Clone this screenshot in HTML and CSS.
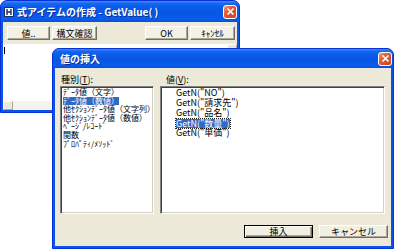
FILE: index.html
```html
<!DOCTYPE html>
<html lang="ja">
<head>
    <meta charset="UTF-8">
    <title>式アイテムの作成</title>
    <link rel="stylesheet" href="styles.css">
</head>
<body>
<div class="desk">

    <!-- main window -->
    <div class="win win-main">
        <div class="titlebar">
            <svg class="appicon" width="10" height="10" viewBox="0 0 10 10">
                <rect x="0.5" y="0.5" width="9" height="9" fill="#fff" stroke="#1c2a6a"/>
                <path d="M3 2v6M7 2v6M3 5h4" stroke="#1c2a6a" stroke-width="1.4"/>
            </svg>
            <span class="title">式アイテムの作成 - GetValue( )</span>
            <span class="close">
                <svg width="9" height="9" viewBox="0 0 9 9"><path d="M1.5 1.5l6 6M7.5 1.5l-6 6" stroke="#fff" stroke-width="1.7"/></svg>
            </span>
        </div>
        <div class="frame">
            <div class="toolbar">
                <button class="btn btn-tb">値..</button>
                <button class="btn btn-tb">構文確認</button>
                <span class="spacer"></span>
                <button class="btn btn-tb">OK</button>
                <button class="btn btn-tb">ｷｬﾝｾﾙ</button>
            </div>
            <div class="editor">
                <div class="edit-area"><span class="caret"></span></div>
                <div class="vscroll"><span class="sbtn"></span></div>
            </div>
            <div class="hscroll"><span class="sbtn"></span></div>
        </div>
    </div>

    <!-- insert value dialog -->
    <div class="win win-dlg">
        <div class="titlebar">
            <span class="title">値の挿入</span>
            <span class="close">
                <svg width="9" height="9" viewBox="0 0 9 9"><path d="M1.5 1.5l6 6M7.5 1.5l-6 6" stroke="#fff" stroke-width="1.7"/></svg>
            </span>
        </div>
        <div class="frame">
            <div class="dlg-grid">
                <label class="lbl">種別(<u>T</u>):</label>
                <label class="lbl">値(<u>V</u>):</label>
                <ul class="list list-kind">
                    <li>ﾃﾞｰﾀ値（文字）</li>
                    <li><span class="sel">ﾃﾞｰﾀ値（数値）</span></li>
                    <li>他ｾｸｼｮﾝﾃﾞｰﾀ値（文字列）</li>
                    <li>他ｾｸｼｮﾝﾃﾞｰﾀ値（数値）</li>
                    <li>ﾍﾟｰｼﾞ/ﾚｺｰﾄﾞ</li>
                    <li>関数</li>
                    <li>ﾌﾟﾛﾊﾟﾃｨ/ﾒｿｯﾄﾞ</li>
                </ul>
                <ul class="list list-value">
                    <li>GetN("NO")</li>
                    <li>GetN("請求先")</li>
                    <li>GetN("品名")</li>
                    <li><span class="sel focus">GetN("数量")</span></li>
                    <li>GetN("単価")</li>
                </ul>
            </div>
            <div class="dlg-buttons">
                <button class="btn btn-dlg default">挿入</button>
                <button class="btn btn-dlg">キャンセル</button>
            </div>
        </div>
    </div>

</div>
</body>
</html>
```

FILE: styles.css
```css
* {
    box-sizing: border-box;
}

body {
    margin: 0;
    background: #fff;
    font-family: "Noto Sans CJK JP", "Noto Sans", sans-serif;
    font-size: 9px;
    color: #000;
    overflow: hidden;
}

.desk {
    position: relative;
    width: 395px;
    height: 250px;
}

/* xp style windows */
.win {
    position: absolute;
    display: flex;
    flex-direction: column;
    background: #0a55e6;
    border: 1px solid #0831d9;
    border-radius: 7px 7px 0 0;
}

.win-main {
    left: 0;
    top: 0;
    width: 240px;
    height: 113px;
}

.win-dlg {
    left: 52px;
    top: 48px;
    width: 342px;
    height: 201px;
}

.titlebar {
    display: flex;
    align-items: center;
    height: 21px;
    padding: 0 2px 0 3px;
    border-radius: 6px 6px 0 0;
    background: linear-gradient(to bottom, #3d8df7 0%, #1467ee 12%, #0a5be8 30%, #0856e3 60%, #0a5ded 85%, #0650d8 100%);
    color: #fff;
    font-weight: bold;
    font-size: 10px;
}

.win-dlg .titlebar {
    height: 19px;
    padding-left: 7px;
    padding-right: 1px;
}

.appicon {
    margin-right: 3px;
    flex: none;
}

.title {
    flex: 1;
    white-space: nowrap;
    text-shadow: 1px 1px 0 #0b2f9a;
}

.close {
    display: flex;
    align-items: center;
    justify-content: center;
    width: 14px;
    height: 14px;
    border: 1px solid #fff;
    border-radius: 3px;
    background: linear-gradient(135deg, #ee9a7a 0%, #e2582f 40%, #d1421c 100%);
}

.frame {
    flex: 1;
    display: flex;
    flex-direction: column;
    margin: 0 2px 2px;
    background: #ece9d8;
}

/* main window */
.toolbar {
    display: flex;
    align-items: center;
    gap: 2px;
    height: 22px;
    padding: 0 2px 0 4px;
}

.spacer {
    flex: 1;
}

.btn {
    font-family: inherit;
    font-size: 9px;
    color: #000;
    padding: 0;
    background: #f3f1e6;
    border: 1px solid;
    border-color: #fff #716f64 #716f64 #fff;
    box-shadow: inset -1px -1px #aca899;
    line-height: 1;
}

.btn-tb {
    width: 43px;
    height: 14px;
}

.btn-tb:nth-child(2),
.btn-tb:nth-child(5) {
    width: 45px;
}

.editor {
    flex: 1;
    display: flex;
    background: #fff;
}

.edit-area {
    flex: 1;
    padding: 3px 0 0 1px;
}

.caret {
    display: block;
    width: 1px;
    height: 7px;
    background: #000;
}

.vscroll {
    width: 10px;
    background: #f4f3ee;
}

.hscroll {
    height: 9px;
    background: #f4f3ee;
}

.sbtn {
    display: block;
    width: 10px;
    height: 9px;
    background: #ece9d8;
    border: 1px solid;
    border-color: #fff #aca899 #aca899 #fff;
}

/* dialog */
.dlg-grid {
    display: grid;
    grid-template-columns: 94px 225px;
    grid-template-rows: 12px 128px;
    column-gap: 6px;
    padding: 6px 0 0 5px;
}

.lbl {
    line-height: 12px;
    padding-left: 1px;
    white-space: nowrap;
}

.lbl + .lbl {
    padding-left: 6px;
}

.list {
    margin: 0;
    padding: 1px 0 0 1px;
    list-style: none;
    background: #fff;
    border: 1px solid;
    border-color: #808080 #fff #fff #808080;
    box-shadow: inset 1px 1px #404040, inset -1px -1px #d4d0c8;
    overflow: hidden;
    white-space: nowrap;
}

.list-kind li {
    height: 8.6px;
    font-size: 8px;
    line-height: 8.6px;
    padding-left: 1px;
}

.list-value li {
    height: 10px;
    line-height: 10px;
    padding-left: 14px;
}

.sel {
    display: inline-block;
    background: #316ac5;
    color: #fff;
}

.list-value .sel {
    line-height: 9px;
    margin-top: 0.5px;
}

.focus {
    outline: 1px dotted #1c1c1c;
}

.dlg-buttons {
    display: flex;
    justify-content: flex-end;
    gap: 6px;
    padding: 11px 3px 0 0;
}

.btn-dlg {
    width: 69px;
    height: 13px;
    background: #f1efe3;
}

.btn-dlg.default {
    border-color: #000;
    box-shadow: inset 1px 1px #fff, inset -1px -1px #716f64, inset -2px -2px #aca899;
}
```
